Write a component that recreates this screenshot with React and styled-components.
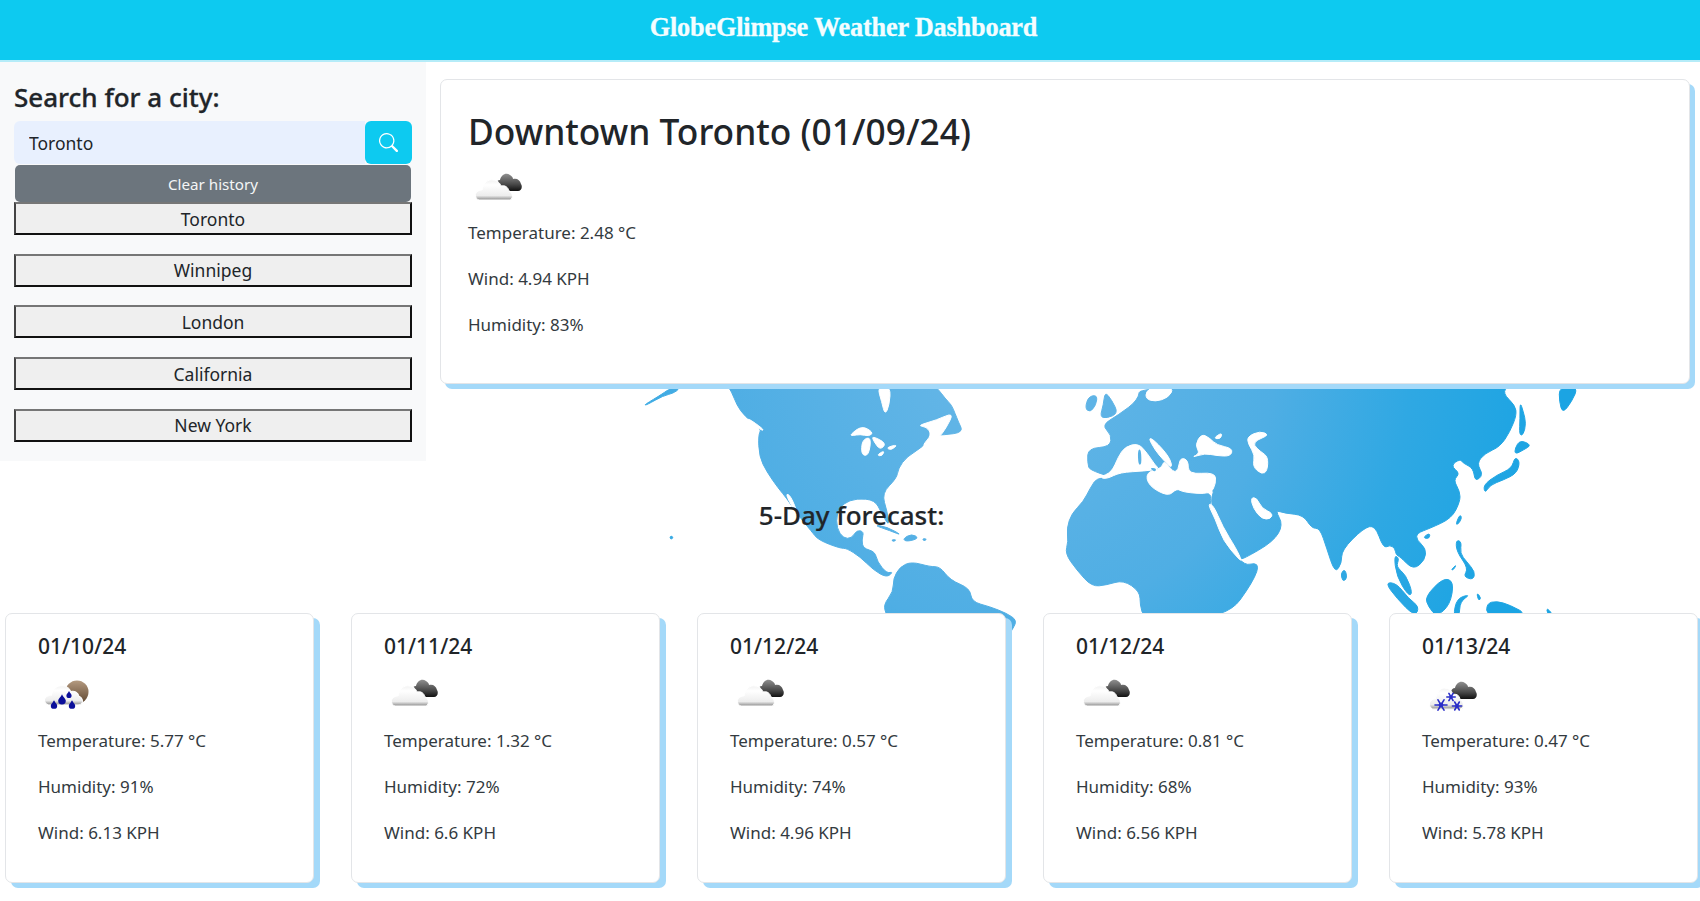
import React, { useId } from 'react'
import styled, { createGlobalStyle } from 'styled-components'

const GlobalStyle = createGlobalStyle`
  html, body {
    margin: 0;
    padding: 0;
    height: 901px;
    overflow: hidden;
    background: #fff;
    font-family: "Noto Sans", "Open Sans", sans-serif;
    color: #212529;
  }
  * { box-sizing: border-box; }
`

const Page = styled.div`
  position: relative;
  width: 1700px;
  height: 901px;
  overflow: hidden;
`

const MapLayer = styled.svg`
  position: absolute;
  top: 0;
  left: 0;
  z-index: 0;
  filter: blur(0.4px);
`

const Content = styled.div`
  position: relative;
  z-index: 1;
`

const Header = styled.header`
  height: 62px;
  background: #0dcaf0;
  border-bottom: 2px solid #b5ecf8;
  padding: 0 13px 5px 0;
  display: flex;
  align-items: center;
  justify-content: center;
  & h1 {
    margin: 0;
    color: #f4fdff;
    font-family: "Liberation Serif", serif;
    font-weight: 700;
    font-size: 26.3px;
    letter-spacing: -0.2px;
    -webkit-text-stroke: 0.3px #f4fdff;
  }
`

const TopRow = styled.div`
  display: flex;
  align-items: flex-start;
`

const Sidebar = styled.aside`
  width: 426px;
  flex: none;
  background: #f8f9fa;
  padding: 17px 14px 19px;
`

const SearchTitle = styled.h3`
  margin: 0 0 6px;
  font-size: 26px;
  font-weight: 500;
  line-height: 36px;
  -webkit-text-stroke: 0.3px #212529;
`

const SearchGroup = styled.div`
  display: flex;
  height: 43px;
`

const SearchInput = styled.input`
  flex: 1;
  min-width: 0;
  border: 0;
  outline: 0;
  background: #e8f0fe;
  border-radius: 6px 0 0 6px;
  padding: 0 15px;
  font: inherit;
  font-size: 17.5px;
  color: #212529;
`

const SearchButton = styled.button`
  width: 47px;
  border: 0;
  padding: 0;
  background: #0dcaf0;
  border-radius: 6px;
  color: #fff;
  display: flex;
  align-items: center;
  justify-content: center;
`

const ClearButton = styled.button`
  display: block;
  width: 396px;
  height: 37px;
  margin: 1px 1px 0;
  border: 0;
  border-radius: 5px;
  background: #6c757d;
  color: #f4f5f6;
  font: inherit;
  font-size: 15.2px;
  padding: 0;
`

const HistoryList = styled.div`
  display: flex;
  flex-direction: column;
  gap: 18.7px;
`

const HistoryButton = styled.button`
  height: 33px;
  padding: 0;
  background: #efefef;
  border-style: solid;
  border-width: 2px;
  border-color: #767676 #111 #111 #444;
  color: #212529;
  font: inherit;
  font-size: 17.5px;
`

const CurrentCard = styled.section`
  width: 1250px;
  height: 305px;
  margin: 17px 0 0 14px;
  padding: 29px 27px 0;
  background: #fff;
  border: 1px solid #e3e5e8;
  border-radius: 7px;
  box-shadow: 5px 5px 0 #a4d9f9;
  & h2 {
    margin: 0 0 17px;
    font-size: 35.3px;
    font-weight: 500;
    line-height: 44px;
  }
`

const Stats = styled.div`
  display: flex;
  flex-direction: column;
  gap: 19px;
  margin-top: ${props => props.top}px;
  & p {
    margin: 0;
    font-size: 17px;
    line-height: 27px;
    color: #333a40;
  }
`

const ForecastTitle = styled.h3`
  margin: 37px 0 81px;
  padding-left: 3px;
  text-align: center;
  font-size: 26px;
  font-weight: 500;
  line-height: 34px;
  -webkit-text-stroke: 0.2px #212529;
`

const ForecastRow = styled.div`
  display: grid;
  grid-template-columns: repeat(5, 309px);
  gap: 37px;
  padding-left: 5px;
`

const DayCard = styled.article`
  height: 270px;
  padding: 17px 32px 0;
  background: #fff;
  border: 1px solid #e3e5e8;
  border-radius: 7px;
  box-shadow: 6px 5px 0 #a4d9f9;
  & h4 {
    margin: 0 0 15px;
    font-size: 21px;
    font-weight: 500;
    line-height: 30px;
  }
`

const IconSvg = styled.svg`
  display: block;
  filter: blur(0.4px);
`

const smooth = (ox, oy, str) => {
  const p = str.trim().split(/\s+/).map(s => {
    const [x, y] = s.split(',').map(Number)
    return [ox + x / 3, oy + y / 3]
  })
  const mid = (a, b) => [(a[0] + b[0]) / 2, (a[1] + b[1]) / 2]
  const f = n => n.toFixed(1)
  const start = mid(p[p.length - 1], p[0])
  let d = `M${f(start[0])} ${f(start[1])}`
  p.forEach((pt, i) => {
    const m = mid(pt, p[(i + 1) % p.length])
    d += `Q${f(pt[0])} ${f(pt[1])} ${f(m[0])} ${f(m[1])}`
  })
  return d + 'Z'
}

const AM = [630, 385]
const EU = [1040, 385]
const AS = [1320, 385]

const blueShapes = [
  // north + central america
  [AM, '285,-10 305,20 320,60 345,95 395,132 385,150 388,215 410,260 445,310 470,340 500,385 545,440 565,465 630,490 650,490 690,515 730,555 770,578 790,560 770,565 742,530 735,500 700,490 695,465 702,440 680,435 665,460 640,460 620,430 620,385 640,355 680,340 735,345 755,385 778,425 772,380 755,325 800,280 805,250 830,215 880,185 905,150 940,150 1000,142 985,110 975,85 965,60 945,40 925,13 900,-10'],
  // south america
  [AM, '770,690 760,660 790,620 790,580 810,545 845,530 900,545 930,545 960,585 1020,610 1025,650 1080,665 1130,685 1160,705 1150,730 1110,790 800,790'],
  // alaska sliver, hawaii, caribbean
  [AM, '42,60 100,25 120,10 150,10 130,25 100,32 50,60'],
  [AM, '119,455 127,453 129,460 122,463'],
  [AM, '730,420 770,425 818,452 780,437'],
  [AM, '818,462 845,446 868,460 830,470'],
  [AM, '878,460 892,463 880,468'],
  [AM, '784,464 800,464 790,470'],
  // eurasia
  [EU, '145,190 210,185 215,150 185,120 235,90 295,45 300,0 1405,0 1388,25 1425,60 1430,90 1410,140 1380,185 1335,205 1310,235 1330,270 1305,290 1300,250 1270,235 1260,222 1232,242 1260,265 1240,285 1260,320 1260,350 1235,400 1170,430 1130,445 1130,465 1158,490 1155,525 1120,555 1080,515 1068,510 1065,490 1050,480 1030,490 1005,420 970,430 905,495 905,535 885,565 860,490 840,430 815,430 790,390 735,385 705,375 730,420 700,470 610,522 600,520 505,360 530,300 400,320 150,262 142,230'],
  // africa
  [EU, '175,272 150,310 130,350 95,385 80,430 85,470 75,505 110,555 155,605 200,600 250,585 300,620 300,660 312,700 560,700 640,590 660,530 600,545 505,360 520,320 320,280'],
  // uk, ireland
  [EU, '195,20 215,45 235,85 200,100 180,95 190,60'],
  [EU, '135,70 145,35 172,30 168,60 150,82'],
  // asia islands
  [AS, '718,5 775,5 755,50 728,85 718,50'],
  [AS, '600,50 610,80 618,115 610,150 598,150 600,100'],
  [AS, '600,165 635,180 610,195 585,208 585,190'],
  [AS, '585,215 600,230 590,265 550,285 510,300 495,325 490,300 530,270 575,250'],
  [AS, '408,415 420,388 426,400 412,420'],
  [AS, '308,458 330,443 328,462'],
  [AS, '408,465 425,470 420,505 440,530 465,560 460,585 430,575 445,550 410,500'],
  [AS, '393,555 410,538 400,555'],
  [AS, '62,565 75,552 82,580 68,590'],
  [AS, '195,592 230,595 265,640 298,665 285,695 230,640'],
  [AS, '222,510 238,520 228,545 258,570 278,625 265,632 230,575'],
  [AS, '315,635 370,578 402,590 390,660 350,695 325,665'],
  [AS, '400,695 410,640 452,628 420,650 418,695'],
  [AS, '470,622 484,640 475,647'],
  [AS, '500,655 530,648 570,660 625,690 500,695'],
  [AS, '680,668 698,688 682,686']
]

const whiteShapes = [
  // hudson bay, st lawrence, lakes
  [AM, '742,5 755,50 765,90 778,60 782,5'],
  [AM, '862,122 920,105 972,82 948,130 925,160 888,188 878,180 905,150 890,125'],
  [AM, '660,150 695,122 730,142 718,154 690,148 668,152'],
  [AM, '696,165 724,155 716,212 694,210'],
  [AM, '725,152 770,175 750,195 732,170'],
  [AM, '768,188 804,178 784,196'],
  [AM, '740,210 764,196 756,214'],
  [AM, '352,98 400,132 398,138 360,112'],
  [AM, '308,58 326,82 318,80'],
  [AM, '466,325 482,332 505,390 490,372'],
  // mediterranean
  [EU, '178,277 215,262 235,215 255,185 295,175 322,205 345,240 358,252 315,258 240,262 200,282'],
  [EU, '318,262 365,250 372,225 400,262 415,255 420,218 445,225 445,268 525,262 528,295 512,328 430,322 410,310 385,335 325,302'],
  [EU, '325,158 342,165 388,215 398,252 370,225 345,195'],
  // black sea, azov, caspian, gulf
  [EU, '453,218 480,205 465,180 485,146 510,160 530,180 578,190 572,214 530,212 495,205'],
  [EU, '520,160 547,142 542,162'],
  [EU, '622,155 660,138 688,150 650,165 640,180 662,200 684,215 682,258 665,268 638,245 645,210 625,178'],
  [EU, '632,338 650,338 665,370 698,385 692,402 665,402 640,370'],
  // red sea
  [EU, '503,356 520,360 548,425 588,490 606,528 596,522 550,468 525,400'],
  // baltic
  [EU, '318,18 345,5 402,8 385,38 345,50 318,42']
]

const landOverlays = [
  [EU, '293,195 303,192 305,238 295,240'],
  [EU, '328,248 350,250 345,262']
]

const WorldMap = () => (
  <MapLayer width="1700" height="901" viewBox="0 0 1700 901" aria-hidden="true">
    <defs>
      <radialGradient id="land" gradientUnits="userSpaceOnUse" cx="1000" cy="350" r="550">
        <stop offset="0" stopColor="#68b7e7" />
        <stop offset="0.5" stopColor="#4faee4" />
        <stop offset="0.75" stopColor="#2fa8e3" />
        <stop offset="1" stopColor="#1ba4e3" />
      </radialGradient>
    </defs>
    {blueShapes.map(([o, s], i) => <path key={i} d={smooth(o[0], o[1], s)} fill="url(#land)" stroke="url(#land)" strokeWidth="1" />)}
    {whiteShapes.map(([o, s], i) => <path key={i} d={smooth(o[0], o[1], s)} fill="#fff" stroke="#fff" strokeWidth="1" />)}
    {landOverlays.map(([o, s], i) => <path key={i} d={smooth(o[0], o[1], s)} fill="url(#land)" />)}
  </MapLayer>
)

const whiteCloud = 'M4 23C0 22-1 16 3 14C5 13 6 13 7 13C8 6 13 2 18 3C22 3 25 6 26 9C30 8 33 10 34 14C37 15 38 19 37 21C36 23 35 23 33 23Z'
const darkCloud = 'M3 14C0 12 1 7 5 7C6 2 11-1 15 2C17 3 18 5 18 6C22 5 25 7 26 11C28 14 26 18 23 18L10 18C7 18 5 16 3 14Z'

const Flake = ({ x, y, r, color }) => (
  <g stroke={color} strokeWidth="1.6" strokeLinecap="round">
    <line x1={x - r} y1={y} x2={x + r} y2={y} />
    <line x1={x - r * 0.5} y1={y - r * 0.87} x2={x + r * 0.5} y2={y + r * 0.87} />
    <line x1={x - r * 0.5} y1={y + r * 0.87} x2={x + r * 0.5} y2={y - r * 0.87} />
    <circle cx={x} cy={y} r={r * 0.4} fill={color} stroke="none" />
  </g>
)

const Drop = ({ x, y, s }) => (
  <path
    d={`M${x} ${y - s * 1.5}C${x + s * 0.4} ${y - s * 0.6} ${x + s} ${y - s * 0.3} ${x + s} ${y + s * 0.2}A${s} ${s} 0 0 1 ${x - s} ${y + s * 0.2}C${x - s} ${y - s * 0.3} ${x - s * 0.4} ${y - s * 0.6} ${x} ${y - s * 1.5}Z`}
    fill="#0b0f9a"
  />
)

const WeatherIcon = ({ kind }) => {
  const id = useId()
  return (
    <IconSvg width="60" height="40" viewBox="0 0 60 40" aria-hidden="true">
      <defs>
        <linearGradient id={`${id}w`} x1="0" y1="0" x2="0" y2="1">
          <stop offset="0" stopColor="#f2f2f2" />
          <stop offset="0.25" stopColor="#fff" />
          <stop offset="0.78" stopColor="#ededed" />
          <stop offset="1" stopColor="#8c8c8c" />
        </linearGradient>
        <linearGradient id={`${id}d`} x1="0" y1="0" x2="0" y2="1">
          <stop offset="0" stopColor="#8f8f8f" />
          <stop offset="0.6" stopColor="#4a4a4a" />
          <stop offset="1" stopColor="#111" />
        </linearGradient>
        <linearGradient id={`${id}s`} x1="0" y1="0" x2="0" y2="1">
          <stop offset="0" stopColor="#b49a80" />
          <stop offset="1" stopColor="#5f4630" />
        </linearGradient>
      </defs>
      {kind === 'cloud' && (
        <g>
          <path d={darkCloud} transform="translate(27 3)" fill={`url(#${id}d)`} />
          <path d={whiteCloud} transform="translate(7 7)" fill={`url(#${id}w)`} stroke="#fff" strokeWidth="1" />
        </g>
      )}
      {kind === 'rain' && (
        <g>
          <circle cx="39" cy="16" r="11.5" fill={`url(#${id}s)`} />
          <path d={whiteCloud} transform="translate(6 7) scale(1.03 0.95)" fill={`url(#${id}w)`} stroke="#fff" strokeWidth="1" />
          <Drop x={16} y={29} s={3.2} />
          <Drop x={24} y={24} s={3.8} />
          <Drop x={31} y={19} s={2.6} />
          <Drop x={34} y={29} s={3.2} />
        </g>
      )}
      {kind === 'snow' && (
        <g>
          <path d={darkCloud} transform="translate(28 5)" fill={`url(#${id}d)`} />
          <path d={whiteCloud} transform="translate(7 9) scale(0.92 1.05)" fill={`url(#${id}w)`} stroke="#fff" strokeWidth="1" />
          <Flake x={19} y={29} r={6} color="#2a2ec8" />
          <Flake x={29} y={21} r={4.2} color="#2a2ec8" />
          <Flake x={35} y={30} r={4.6} color="#2a2ec8" />
        </g>
      )}
    </IconSvg>
  )
}

const cities = ['Toronto', 'Winnipeg', 'London', 'California', 'New York']

const forecast = [
  { date: '01/10/24', icon: 'rain', temp: '5.77', hum: '91', wind: '6.13' },
  { date: '01/11/24', icon: 'cloud', temp: '1.32', hum: '72', wind: '6.6' },
  { date: '01/12/24', icon: 'cloud', temp: '0.57', hum: '74', wind: '4.96' },
  { date: '01/12/24', icon: 'cloud', temp: '0.81', hum: '68', wind: '6.56' },
  { date: '01/13/24', icon: 'snow', temp: '0.47', hum: '93', wind: '5.78' }
]

const App = () => (
  <Page>
    <GlobalStyle />
    <WorldMap />
    <Content>
      <Header>
        <h1>GlobeGlimpse Weather Dashboard</h1>
      </Header>
      <TopRow>
        <Sidebar>
          <SearchTitle>Search for a city:</SearchTitle>
          <SearchGroup>
            <SearchInput readOnly value="Toronto" />
            <SearchButton aria-label="Search">
              <svg width="19" height="19" viewBox="0 0 16 16" fill="currentColor">
                <path d="M11.742 10.344a6.5 6.5 0 1 0-1.397 1.398h-.001c.03.04.062.078.098.115l3.85 3.85a1 1 0 0 0 1.415-1.414l-3.85-3.85a1.007 1.007 0 0 0-.115-.1zM12 6.5a5.5 5.5 0 1 1-11 0 5.5 5.5 0 0 1 11 0z" />
              </svg>
            </SearchButton>
          </SearchGroup>
          <ClearButton>Clear history</ClearButton>
          <HistoryList>
            {cities.map(c => <HistoryButton key={c}>{c}</HistoryButton>)}
          </HistoryList>
        </Sidebar>
        <CurrentCard>
          <h2>Downtown Toronto (01/09/24)</h2>
          <WeatherIcon kind="cloud" />
          <Stats top={9}>
            <p>Temperature: 2.48 °C</p>
            <p>Wind: 4.94 KPH</p>
            <p>Humidity: 83%</p>
          </Stats>
        </CurrentCard>
      </TopRow>
      <ForecastTitle>5-Day forecast:</ForecastTitle>
      <ForecastRow>
        {forecast.map((d, i) => (
          <DayCard key={i}>
            <h4>{d.date}</h4>
            <WeatherIcon kind={d.icon} />
            <Stats top={11}>
              <p>Temperature: {d.temp} °C</p>
              <p>Humidity: {d.hum}%</p>
              <p>Wind: {d.wind} KPH</p>
            </Stats>
          </DayCard>
        ))}
      </ForecastRow>
    </Content>
  </Page>
)

export default App
